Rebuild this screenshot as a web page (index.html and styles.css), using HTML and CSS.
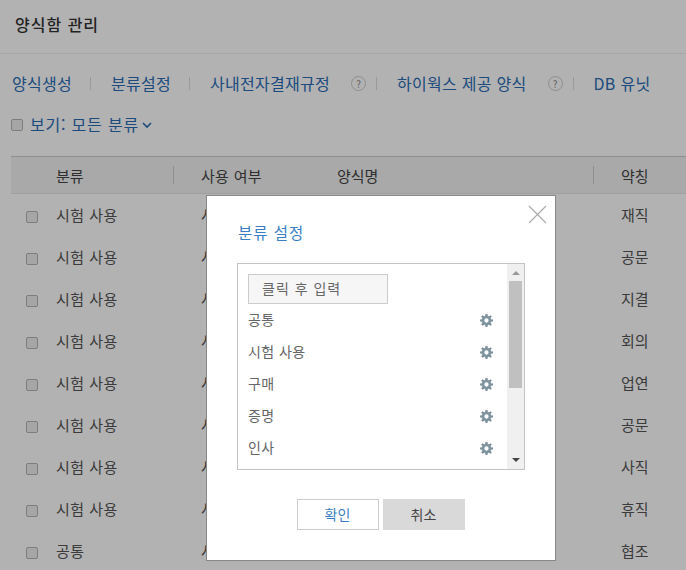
FILE: index.html
```html
<!DOCTYPE html>
<html lang="ko">
<head>
    <meta charset="UTF-8">
    <meta name="viewport" content="width=device-width, initial-scale=1.0">
    <title>양식함 관리</title>
    <link rel="stylesheet" href="styles.css">
</head>
<body>
    <svg class="icon-defs" width="0" height="0">
        <symbol id="gear" viewBox="0 0 14 14">
            <path fill-rule="evenodd" d="M5.900 0h2.200l.3 2 1.100.5L11.200 1.300l1.500 1.500-1.200 1.700.5 1.100 2 .3v2.200l-2 .3-.5 1.100 1.200 1.700-1.500 1.500-1.700-1.200-1.100.5-.3 2H5.900l-.3-2-1.100-.5-1.700 1.200-1.500-1.500 1.200-1.700-.5-1.100-2-.3V5.900l2-.3.5-1.100L1.300 2.800l1.500-1.500 1.700 1.200 1.100-.5zM7 4.700a2.300 2.300 0 1 0 0 4.600 2.300 2.300 0 0 0 0-4.600z"/>
        </symbol>
    </svg>

    <div class="page">
        <h1 class="page-title">양식함 관리</h1>

        <nav class="tabs">
            <a href="#" class="tab">양식생성</a>
            <span class="sep"></span>
            <a href="#" class="tab">분류설정</a>
            <span class="sep"></span>
            <a href="#" class="tab">사내전자결재규정</a>
            <span class="help">?</span>
            <span class="sep sep-tight"></span>
            <a href="#" class="tab">하이웍스 제공 양식</a>
            <span class="help">?</span>
            <span class="sep sep-tight"></span>
            <a href="#" class="tab">DB 유닛</a>
        </nav>

        <div class="view-row">
            <input type="checkbox" class="check">
            <a href="#" class="view-link">보기: 모든 분류</a>
            <svg class="chevron" width="10" height="7" viewBox="0 0 10 7"><path d="M1 1l4 4 4-4" fill="none" stroke="currentColor" stroke-width="1.600"/></svg>
        </div>

        <div class="table">
            <div class="table-head">
                <div class="col-type head-cell">분류</div>
                <div class="col-use head-cell has-line">사용 여부</div>
                <div class="col-name head-cell">양식명</div>
                <div class="col-short head-cell has-line">약칭</div>
            </div>
            <div class="row"><div class="col-check"><input type="checkbox" class="check"></div><div class="col-type">시험 사용</div><div class="col-use">사용</div><div class="col-name"></div><div class="col-short">재직</div></div>
            <div class="row"><div class="col-check"><input type="checkbox" class="check"></div><div class="col-type">시험 사용</div><div class="col-use">사용</div><div class="col-name"></div><div class="col-short">공문</div></div>
            <div class="row"><div class="col-check"><input type="checkbox" class="check"></div><div class="col-type">시험 사용</div><div class="col-use">사용</div><div class="col-name"></div><div class="col-short">지결</div></div>
            <div class="row"><div class="col-check"><input type="checkbox" class="check"></div><div class="col-type">시험 사용</div><div class="col-use">사용</div><div class="col-name"></div><div class="col-short">회의</div></div>
            <div class="row"><div class="col-check"><input type="checkbox" class="check"></div><div class="col-type">시험 사용</div><div class="col-use">사용</div><div class="col-name"></div><div class="col-short">업연</div></div>
            <div class="row"><div class="col-check"><input type="checkbox" class="check"></div><div class="col-type">시험 사용</div><div class="col-use">사용</div><div class="col-name"></div><div class="col-short">공문</div></div>
            <div class="row"><div class="col-check"><input type="checkbox" class="check"></div><div class="col-type">시험 사용</div><div class="col-use">사용</div><div class="col-name"></div><div class="col-short">사직</div></div>
            <div class="row"><div class="col-check"><input type="checkbox" class="check"></div><div class="col-type">시험 사용</div><div class="col-use">사용</div><div class="col-name"></div><div class="col-short">휴직</div></div>
            <div class="row"><div class="col-check"><input type="checkbox" class="check"></div><div class="col-type">공통</div><div class="col-use">사용</div><div class="col-name"></div><div class="col-short">협조</div></div>
        </div>
    </div>

    <div class="dim"></div>

    <div class="modal">
        <svg class="modal-close" width="19" height="19" viewBox="0 0 19 19"><path d="M1 1l17 17M18 1L1 18" fill="none" stroke="#aaa" stroke-width="1.100"/></svg>
        <h2 class="modal-title">분류 설정</h2>

        <div class="list-box">
            <div class="list-body">
                <input type="text" class="list-input" placeholder="클릭 후 입력">
                <div class="list-item"><span>공통</span><svg class="gear"><use href="#gear"/></svg></div>
                <div class="list-item"><span>시험 사용</span><svg class="gear"><use href="#gear"/></svg></div>
                <div class="list-item"><span>구매</span><svg class="gear"><use href="#gear"/></svg></div>
                <div class="list-item"><span>증명</span><svg class="gear"><use href="#gear"/></svg></div>
                <div class="list-item"><span>인사</span><svg class="gear"><use href="#gear"/></svg></div>
            </div>
            <div class="scrollbar">
                <div class="arrow arrow-up"></div>
                <div class="thumb"></div>
                <div class="arrow arrow-down"></div>
            </div>
        </div>

        <div class="modal-buttons">
            <button class="btn btn-ok">확인</button>
            <button class="btn btn-cancel">취소</button>
        </div>
    </div>
</body>
</html>
```

FILE: styles.css
```css
html, body {
    height: 100%;
}
body {
    margin: 0;
    background: #fff;
    font-family: "Noto Sans CJK KR", "Noto Sans", sans-serif;
    font-size: 14px;
    color: #555;
    overflow: hidden;
}
.icon-defs {
    position: absolute;
}
.page {
    height: 570px;
    overflow: hidden;
}
.page-title {
    margin: 0;
    height: 53px;
    padding: 0 15px;
    line-height: 48px;
    font-size: 16px;
    font-weight: 500;
    letter-spacing: 1px;
    color: #333;
    border-bottom: 1px solid #f0f0f0;
}
.tabs {
    display: flex;
    align-items: center;
    height: 59px;
    padding-left: 12px;
}
.tab {
    padding-bottom: 2px;
    color: #2a6cb5;
    text-decoration: none;
    font-size: 16px;
    letter-spacing: .28px;
    white-space: nowrap;
}
.sep {
    width: 1px;
    height: 13px;
    background: #ddd;
    margin: 0 20px 0 18px;
}
.sep-tight {
    margin: 0 20px 0 10px;
}
.help {
    width: 13px;
    height: 13px;
    margin-left: 21px;
    border: 1px solid #ccc;
    border-radius: 50%;
    font-size: 10px;
    line-height: 13px;
    text-align: center;
    color: #888;
}
.view-row {
    display: flex;
    align-items: center;
    height: 24px;
    padding-left: 11px;
    color: #2a6cb5;
}
.view-link {
    margin-left: 7px;
    padding-bottom: 2px;
    color: #2a6cb5;
    text-decoration: none;
    font-size: 16px;
    letter-spacing: .8px;
}
.chevron {
    margin-left: 3px;
}
.check {
    appearance: none;
    width: 12px;
    height: 12px;
    margin: 0;
    background: #eee;
    border: 1px solid #b4b4b4;
    border-radius: 2px;
}
.table {
    margin: 19px 0 0 11px;
    border-top: 1px solid #ccc;
    font-size: 15px;
}
.table-head {
    display: flex;
    align-items: center;
    height: 36px;
    background: #f3f3f3;
    border-bottom: 1px solid #e4e4e4;
}
.head-cell {
    position: relative;
    color: #444;
}
.has-line::before {
    content: "";
    position: absolute;
    left: -28px;
    top: 1px;
    width: 1px;
    height: 18px;
    background: #ccc;
}
.table-head .col-type {
    margin-left: 45px;
    letter-spacing: 0;
}
.table-head .col-use {
    letter-spacing: .3px;
}
.row {
    display: flex;
    align-items: center;
    height: 42px;
}
.row .col-type,
.row .col-use,
.row .col-short {
    padding-bottom: 2px;
}
.col-check {
    display: flex;
    width: 45px;
    padding: 4px 0 0 15px;
    box-sizing: border-box;
}
.col-type {
    width: 145px;
    letter-spacing: .5px;
}
.col-use {
    width: 136px;
}
.col-name {
    width: 284px;
}
.col-short {
    width: 40px;
}
.dim {
    position: fixed;
    inset: 0;
    background: rgba(0, 0, 0, .3);
}
.modal {
    position: fixed;
    left: 206px;
    top: 195px;
    width: 348px;
    height: 364px;
    background: #fff;
    border: 1px solid #888;
}
.modal-close {
    position: absolute;
    right: 8px;
    top: 9px;
}
.modal-title {
    margin: 0;
    padding: 25px 0 0 31px;
    height: 42px;
    font-size: 15.500px;
    line-height: 22px;
    font-weight: 400;
    letter-spacing: 1px;
    color: #3a7fc4;
}
.list-box {
    display: flex;
    margin-left: 30px;
    width: 286px;
    height: 205px;
    border: 1px solid #c4c4c4;
}
.list-body {
    flex: 1;
    padding: 10px 0 0 10px;
}
.list-input {
    display: block;
    box-sizing: border-box;
    width: 140px;
    height: 30px;
    padding: 0 0 2px 13px;
    background: #f6f6f6;
    border: 1px solid #ccc;
    font: inherit;
    font-size: 14px;
    letter-spacing: 1px;
}
.list-input::placeholder {
    color: #666;
}
.list-item {
    display: flex;
    align-items: center;
    justify-content: space-between;
    height: 32px;
    padding-right: 14px;
    color: #666;
    font-size: 14px;
}
.list-item span {
    padding-bottom: 2px;
    letter-spacing: .4px;
}
.gear {
    width: 13px;
    height: 13px;
    fill: #7f949e;
}
.scrollbar {
    position: relative;
    width: 17px;
    background: #f0f0f0;
}
.thumb {
    position: absolute;
    top: 17px;
    left: 2px;
    right: 2px;
    height: 107px;
    background: #c0c0c0;
}
.arrow {
    position: absolute;
    left: 5px;
    width: 0;
    height: 0;
    border-left: 4px solid transparent;
    border-right: 4px solid transparent;
}
.arrow-up {
    top: 7px;
    border-bottom: 4px solid #999;
}
.arrow-down {
    bottom: 7px;
    border-top: 4px solid #444;
}
.modal-buttons {
    display: flex;
    justify-content: center;
    gap: 4px;
    margin-top: 29px;
    padding-right: 1px;
}
.btn {
    box-sizing: border-box;
    width: 82px;
    height: 31px;
    padding: 0 0 2px;
    font: inherit;
    font-size: 14px;
    border: 1px solid #ccc;
    background: #fff;
    color: #3a7fc4;
}
.btn-cancel {
    background: #d9d9d9;
    border-color: #d9d9d9;
    color: #444;
}
```
